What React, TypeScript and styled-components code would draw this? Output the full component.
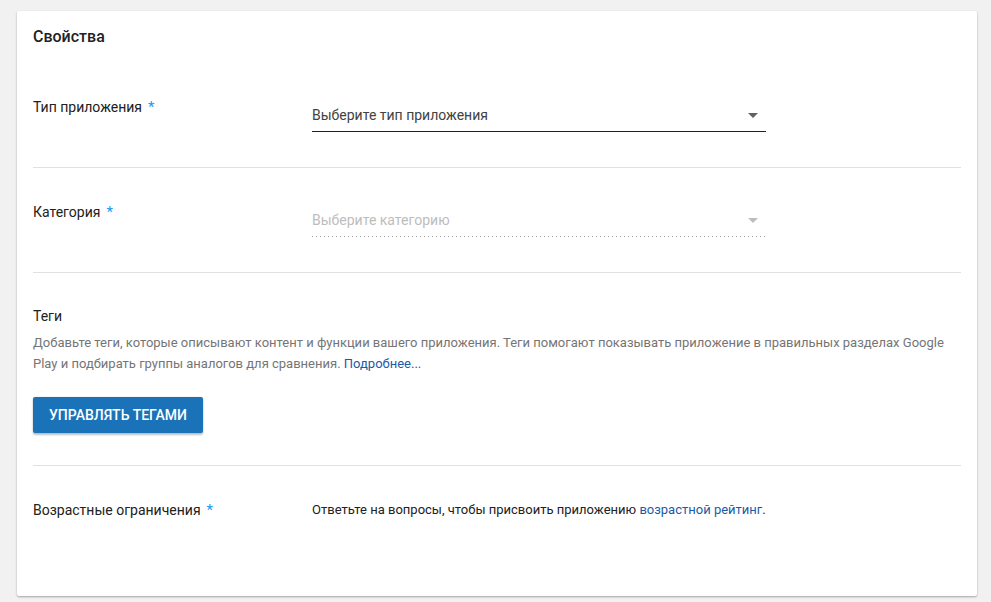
import React from "react";
import styled, { createGlobalStyle } from "styled-components";

const Global = createGlobalStyle`
  html, body { margin: 0; padding: 0; background: #f1f1f1; }
  body { font-family: Roboto, "Noto Sans", sans-serif; color: #212121; }
  * { box-sizing: border-box; }
`;

const Page = styled.div`
  padding: 11px 14px 6px 17px;
`;

const Card = styled.section`
  background: #fff;
  border-radius: 2px;
  box-shadow: 0 1px 2px rgba(0, 0, 0, 0.25), 0 1px 3px rgba(0, 0, 0, 0.08);
  padding: 16px 16px 41px;
`;

const Title = styled.h2`
  margin: 0;
  font-size: 16px;
  line-height: 20px;
  font-weight: 500;
  color: #212121;
  padding-bottom: 16px;
`;

const Row = styled.div<{ $last?: boolean }>`
  display: grid;
  grid-template-columns: 279px 1fr;
  padding: 34px 0 35px;
  border-bottom: ${(p) => (p.$last ? "none" : "1px solid #e0e0e0")};
`;

const Label = styled.div`
  font-size: 14px;
  line-height: 20px;
  color: #212121;
`;

const Req = styled.span`
  color: #2196f3;
  margin-left: 6px;
  font-size: 15px;
`;

const Select = styled.div<{ $disabled?: boolean }>`
  width: 454px;
  margin-top: 8px;
  display: flex;
  align-items: center;
  justify-content: space-between;
  padding: 0 8px 6px 0;
  font-size: 14px;
  line-height: 20px;
  color: ${(p) => (p.$disabled ? "#bdbdbd" : "#424242")};
  ${(p) =>
    p.$disabled
      ? `background-image: linear-gradient(to right, #9e9e9e 0%, #9e9e9e 25%, transparent 25%);
         background-size: 4px 1px; background-repeat: repeat-x; background-position: 0 bottom;
         padding-bottom: 7px;`
      : `border-bottom: 1px solid #212121;`}
`;

const Arrow = styled.span<{ $disabled?: boolean }>`
  width: 0;
  height: 0;
  border-left: 5px solid transparent;
  border-right: 5px solid transparent;
  border-top: 5px solid ${(p) => (p.$disabled ? "#bdbdbd" : "#616161")};
  margin-top: 1px;
`;

const Section = styled.div`
  padding: 33px 0 32px;
  border-bottom: 1px solid #e0e0e0;
`;

const SubTitle = styled.div`
  font-size: 14px;
  line-height: 20px;
  color: #212121;
`;

const Desc = styled.p`
  margin: 6px 0 0;
  font-size: 13px;
  line-height: 21px;
  color: #757575;
`;

const Link = styled.a`
  color: #1a5ba6;
  text-decoration: none;
`;

const Button = styled.button`
  display: block;
  margin-top: 23px;
  height: 36px;
  padding: 0 16px;
  background: #1a73b8;
  color: #fff;
  border: none;
  border-radius: 2px;
  font-family: Roboto, sans-serif;
  font-size: 14px;
  font-weight: 500;
  letter-spacing: 0;
  box-shadow: 0 2px 2px rgba(0, 0, 0, 0.24), 0 0 2px rgba(0, 0, 0, 0.12);
  cursor: pointer;
`;

const Info = styled.div`
  font-size: 13px;
  line-height: 20px;
  color: #212121;
`;

export default function App() {
  return (
    <>
      <Global />
      <Page>
        <Card>
          <Title>Свойства</Title>
          <Row>
            <Label>
              Тип приложения<Req>*</Req>
            </Label>
            <Select>
              <span>Выберите тип приложения</span>
              <Arrow />
            </Select>
          </Row>
          <Row>
            <Label>
              Категория<Req>*</Req>
            </Label>
            <Select $disabled>
              <span>Выберите категорию</span>
              <Arrow $disabled />
            </Select>
          </Row>
          <Section>
            <SubTitle>Теги</SubTitle>
            <Desc>
              Добавьте теги, которые описывают контент и функции вашего приложения. Теги помогают показывать
              приложение в правильных разделах Google Play и подбирать группы аналогов для сравнения.{" "}
              <Link href="#">Подробнее...</Link>
            </Desc>
            <Button>УПРАВЛЯТЬ ТЕГАМИ</Button>
          </Section>
          <Row $last>
            <Label>
              Возрастные ограничения<Req>*</Req>
            </Label>
            <Info>
              Ответьте на вопросы, чтобы присвоить приложению <Link href="#">возрастной рейтинг</Link>.
            </Info>
          </Row>
        </Card>
      </Page>
    </>
  );
}
